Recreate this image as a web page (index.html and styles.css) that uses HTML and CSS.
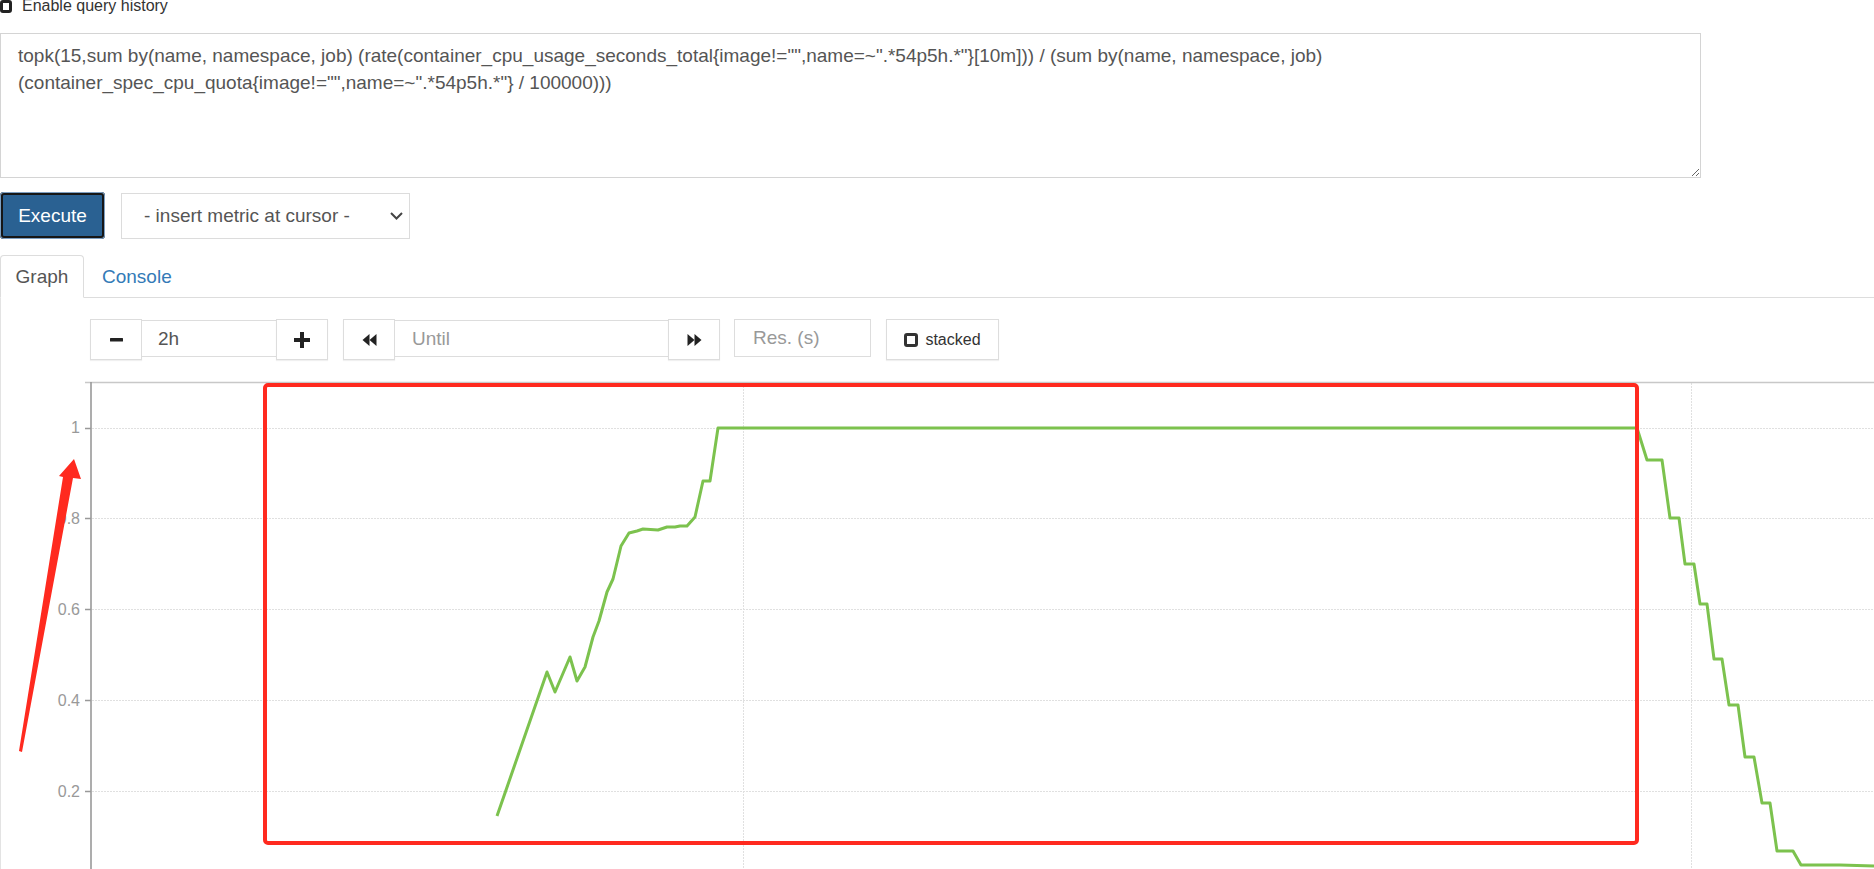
FILE: index.html
```html
<!DOCTYPE html>
<html lang="en">
<head>
<meta charset="utf-8">
<title>Prometheus Graph</title>
<link rel="stylesheet" href="styles.css">
</head>
<body>
<div class="page">
  <div class="history">
    <label class="history-label"><span class="checkbox"></span><span>Enable query history</span></label>
  </div>

  <textarea class="expr" spellcheck="false">topk(15,sum by(name, namespace, job) (rate(container_cpu_usage_seconds_total{image!="",name=~".*54p5h.*"}[10m])) / (sum by(name, namespace, job) (container_spec_cpu_quota{image!="",name=~".*54p5h.*"} / 100000)))</textarea>

  <div class="actions">
    <button class="btn-execute">Execute</button>
    <div class="select">
      <span>- insert metric at cursor -</span>
      <svg class="chevron" width="13" height="8" viewBox="0 0 13 8"><polyline points="1,1 6.5,6.5 12,1" fill="none" stroke="#444" stroke-width="2"/></svg>
    </div>
  </div>

  <ul class="tabs">
    <li class="tab active">Graph</li>
    <li class="tab link">Console</li>
  </ul>

  <div class="tab-content">
    <div class="controls">
      <div class="group">
        <div class="cbtn"><svg width="13" height="4" viewBox="0 0 13 4"><rect x="0" y="0" width="13" height="3.6" rx="0.5" fill="#222"/></svg></div>
        <div class="cinput w-range">2h</div>
        <div class="cbtn"><svg width="16" height="16" viewBox="0 0 16 16"><path d="M6 0h4v6h6v4h-6v6h-4v-6h-6v-4h6z" fill="#222"/></svg></div>
      </div>
      <div class="group">
        <div class="cbtn"><svg width="15" height="12" viewBox="0 0 15 12"><polygon points="7.5,0 0.5,6 7.5,12" fill="#222"/><polygon points="14.5,0 7.5,6 14.5,12" fill="#222"/></svg></div>
        <div class="cinput w-until placeholder">Until</div>
        <div class="cbtn"><svg width="15" height="12" viewBox="0 0 15 12"><polygon points="0.5,0 7.5,6 0.5,12" fill="#222"/><polygon points="7.5,0 14.5,6 7.5,12" fill="#222"/></svg></div>
      </div>
      <div class="cinput w-res placeholder">Res. (s)</div>
      <div class="cbtn stacked"><span class="cb-small"></span><span>stacked</span></div>
    </div>

    <svg class="chart" width="1873" height="489" viewBox="1 380 1873 489">
      <g stroke="#e0e0e0" stroke-width="1" stroke-dasharray="2 1">
        <line x1="92" y1="428.5" x2="1874" y2="428.5"/>
        <line x1="92" y1="518.5" x2="1874" y2="518.5"/>
        <line x1="92" y1="609.5" x2="1874" y2="609.5"/>
        <line x1="92" y1="700.5" x2="1874" y2="700.5"/>
        <line x1="92" y1="791.5" x2="1874" y2="791.5"/>
        <line x1="743.5" y1="383" x2="743.5" y2="869"/>
        <line x1="1691.5" y1="383" x2="1691.5" y2="869"/>
      </g>
      <line x1="85" y1="382.5" x2="1874" y2="382.5" stroke="#c8c8c8" stroke-width="1.5"/>
      <line x1="91" y1="382" x2="91" y2="869" stroke="#999" stroke-width="1.6"/>
      <path d="M85 428.5H91M85 518.5H91M85 609.5H91M85 700.5H91M85 791.5H91" stroke="#999" stroke-width="1.3"/>
      <g class="ylabels">
        <text x="80" y="433" text-anchor="end">1</text>
        <text x="80" y="524" text-anchor="end">0.8</text>
        <text x="80" y="615" text-anchor="end">0.6</text>
        <text x="80" y="706" text-anchor="end">0.4</text>
        <text x="80" y="797" text-anchor="end">0.2</text>
      </g>
      <polyline fill="none" stroke="#7cc24e" stroke-width="3" stroke-linejoin="round"
        points="497,816 547,672 555,692 570,657 577,681 585,667 593,637 599,621 607,592 613,579 621,546 629,533 637,531 643,529 658,530 667,527 675,527 680,526 687,526 695,517 703,481 710,481 718,428 1637,428 1647,460 1662,460 1670,518 1679,518 1685,564 1694,564 1700,604 1707,604 1714,659 1722,659 1729,705 1738,705 1745,757 1754,757 1762,803 1770,803 1777,851 1793,851 1801,865 1840,865 1874,866"/>
      <rect x="265" y="385" width="1372" height="458" rx="3" fill="none" stroke="#ff2a1f" stroke-width="4"/>
      <polygon points="19,751 63,477 59,476 74,459 81,479 73,478 22,752" fill="#ff2a1f"/>
    </svg>
  </div>
</div>
</body>
</html>
```

FILE: styles.css
```css
* {
  box-sizing: border-box;
}

html,
body {
  margin: 0;
  padding: 0;
  background: #fff;
}

body {
  width: 1874px;
  height: 869px;
  overflow: hidden;
  font-family: "Liberation Sans", Arial, sans-serif;
  color: #333;
}

.history {
  display: flow-root;
  height: 33px;
}

.history-label {
  display: flex;
  align-items: center;
  gap: 10px;
  height: 16px;
  margin-top: -2px;
  font-size: 16px;
  line-height: 16px;
  color: #333;
}

.checkbox {
  display: block;
  width: 12px;
  height: 13px;
  border: 3px solid #222;
  border-radius: 3px;
}

.expr {
  display: block;
  width: 1701px;
  height: 145px;
  margin: 0;
  padding: 8px 17px;
  border: 1px solid #d4d4d4;
  font-family: "Liberation Sans", Arial, sans-serif;
  font-size: 19px;
  line-height: 27px;
  color: #555;
  background: #fff;
  resize: vertical;
  outline: none;
}

.actions {
  display: flex;
  align-items: flex-start;
  gap: 16px;
  margin-top: 14px;
}

.btn-execute {
  width: 105px;
  height: 47px;
  padding: 0;
  font-family: "Liberation Sans", Arial, sans-serif;
  font-size: 19px;
  color: #fff;
  background: #2a6192;
  border: none;
  border-radius: 4px;
  box-shadow: inset 0 0 0 1px #7d9fc2, inset 0 0 0 3px #161616;
}

.select {
  display: flex;
  align-items: center;
  width: 289px;
  height: 46px;
  margin-top: 1px;
  padding: 0 6px 0 22px;
  border: 1px solid #dcdcdc;
  font-size: 19px;
  color: #555;
}

.chevron {
  margin-left: auto;
}

.tabs {
  display: flex;
  height: 43px;
  margin: 16px 0 0;
  padding: 0;
  list-style: none;
  border-bottom: 1px solid #ddd;
}

.tab {
  height: 43px;
  font-size: 19px;
  line-height: 41px;
  border: 1px solid transparent;
}

.tab.active {
  width: 84px;
  text-align: center;
  color: #555;
  background: #fff;
  border-color: #ddd #ddd transparent;
  border-radius: 4px 4px 0 0;
}

.tab.link {
  margin-left: 2px;
  padding: 0 15px;
  color: #337ab7;
}

.tab-content {
  border-left: 1px solid #e3e3e3;
  padding-top: 21px;
}

.controls {
  display: flex;
  align-items: flex-start;
  height: 41px;
  padding-left: 89px;
}

.group {
  display: flex;
  align-items: flex-start;
  margin-right: 15px;
}

.cbtn {
  display: flex;
  align-items: center;
  justify-content: center;
  width: 52px;
  height: 41px;
  background: #fff;
  border: 1px solid #ddd;
  box-shadow: 0 1px 1px rgba(0, 0, 0, 0.06);
}

.group .cbtn + .cinput,
.group .cinput + .cbtn {
  margin-left: -1px;
}

.cinput {
  display: flex;
  align-items: center;
  height: 37px;
  margin-top: 1px;
  padding-left: 16px;
  border: 1px solid #ddd;
  font-size: 19px;
  color: #555;
  background: #fff;
}

.cinput.placeholder {
  color: #999;
}

.w-range {
  width: 136px;
}

.w-until {
  width: 275px;
  padding-left: 17px;
}

.w-res {
  width: 137px;
  height: 38px;
  margin-top: 0;
  margin-left: -1px;
  padding-left: 18px;
}

.stacked {
  width: 113px;
  margin-left: 15px;
  gap: 7px;
  font-size: 16px;
  color: #333;
}

.cb-small {
  display: block;
  width: 14px;
  height: 14px;
  border: 3px solid #333;
  border-radius: 3px;
}

.chart {
  display: block;
  margin-top: 20px;
}

.ylabels {
  font-family: "Liberation Sans", Arial, sans-serif;
  font-size: 16px;
  fill: #999;
}
```
